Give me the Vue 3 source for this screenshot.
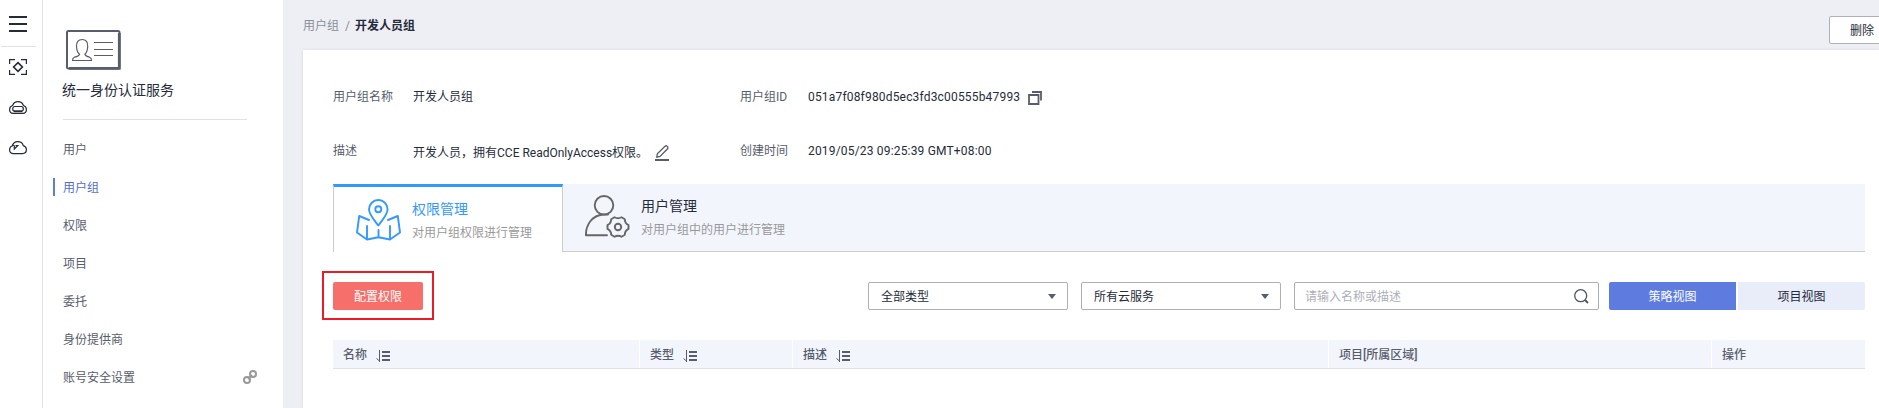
<script setup>
const menu = ['用户', '用户组', '权限', '项目', '委托', '身份提供商', '账号安全设置']
const columns = [
  { label: '名称', sort: true },
  { label: '类型', sort: true },
  { label: '描述', sort: true },
  { label: '项目[所属区域]', sort: false },
  { label: '操作', sort: false },
]
const selects = ['全部类型', '所有云服务']
</script>

<template>
  <div class="page">
    <nav class="rail">
      <div class="burger"><i></i><i></i><i></i></div>
      <div class="rail-line"></div>
      <svg class="rail-icon first" width="18" height="16" viewBox="0 0 18 16">
        <path d="M.6 5V.6H6M12 .6h5.4V5M17.400 11v4.400H12M6 15.400H.6V11" />
        <path d="M9 3.600 13.400 8 9 12.400 4.600 8Z" stroke-width="1.600" />
      </svg>
      <svg class="rail-icon second" width="18" height="14" viewBox="0 0 18 14">
        <path d="M4.200 12.400C1.900 12.200.600 10.400.600 8.400.600 6.500 1.900 5 3.600 4.500 4.500 2 6.500.700 9 .700s4.500 1.300 5.400 3.800c1.700.500 3 2 3 3.900 0 2-1.300 3.800-3.600 4Z" />
        <rect x="3.700" y="5.500" width="10.600" height="4.800" rx="2.200" />
        <path d="M5 10.300h8" stroke-width="1.800" />
      </svg>
      <svg class="rail-icon third" width="18" height="14" viewBox="0 0 18 14">
        <path d="M4.500 12.600C2 12.500.600 10.800.600 8.700c0-1.800 1-3.200 2.600-3.700C4 2.300 6.200.700 8.800.700c2.700 0 4.800 1.500 5.500 3.900 1.800.500 3.100 2 3.100 4 0 2.200-1.600 4-3.900 4Z" />
        <path d="M3.200 3.800 5.300 4.800v3.200L8.800 4.500H6.500" />
      </svg>
    </nav>

    <aside class="side">
      <svg class="logo" width="55" height="40" viewBox="0 0 55 40">
        <rect x="1" y="1" width="52.500" height="37.500" rx="1.500" fill="none" stroke="#575d6c" stroke-width="2" />
        <path d="M53.300 3v35.300H3" fill="none" stroke="#575d6c" stroke-width="2.800" />
        <path d="M13.500 24.200c-1.600-1.300-2.800-4-3-7.500-.300-4.500 1.800-7.200 5.700-7.200s5.800 2.700 5.500 7.200c-.200 3.500-1.300 6.200-2.800 7.500.5 1.600 2.300 2.400 4.600 3 1.600.500 2 1.600 2 3.300h-19c0-1.700.4-2.800 2-3.300 2.700-.700 4.500-1.400 5-3Z" fill="none" stroke="#575d6c" stroke-width="1.200" />
        <path d="M28 12.500h19M28 19.500h19M28 25.500h19" stroke="#575d6c" />
      </svg>
      <h1>统一身份认证服务</h1>
      <ul>
        <li v-for="(m, i) in menu" :key="m" :class="{ active: i === 1 }">
          <span>{{ m }}</span>
          <svg v-if="i === 6" width="14" height="14" viewBox="0 0 14 14" fill="none" stroke="#999">
            <circle cx="10" cy="4" r="3" stroke-width="2" />
            <circle cx="4" cy="10" r="3" stroke-width="2" />
            <path d="M5 9 9 5" stroke-width="2" />
          </svg>
        </li>
      </ul>
    </aside>

    <main>
      <header>
        <div class="crumb"><span>用户组</span><span class="slash">/</span><b>开发人员组</b></div>
        <button class="delete">删除</button>
      </header>

      <section class="card">
        <div class="info">
          <label>用户组名称</label>
          <div class="val">开发人员组</div>
          <label>用户组ID</label>
          <div class="val">
            <span class="id">051a7f08f980d5ec3fd3c00555b47993</span>
            <svg class="copy" width="14" height="14" viewBox="0 0 14 14" fill="none" stroke="#575d6c">
              <path d="M1 4h9.500v9H1Z" stroke-width="1.800" />
              <path d="M4 1h9v8.500" stroke-width="1.800" />
            </svg>
          </div>
        </div>
        <div class="info second-row">
          <label>描述</label>
          <div class="val desc">
            <span>开发人员，拥有<span class="policy">CCE ReadOnlyAccess</span>权限。</span>
            <svg class="pen" width="14" height="16" viewBox="0 0 14 16" fill="none" stroke="#575d6c">
              <path d="M0 15h14" stroke-width="2" />
              <path d="M1.800 12.200 2.300 8.800 10 1.200Q11.200.300 12.300 1.400T12.600 3.800L5 11.500Z" stroke-width="1.300" />
            </svg>
          </div>
          <label>创建时间</label>
          <div class="val"><span class="date">2019/05/23 09:25:39 GMT+08:00</span></div>
        </div>

        <div class="tabs">
          <div class="tab active">
            <svg width="45" height="42" viewBox="0 0 45 42" fill="none" stroke="#3399ff" stroke-width="1.900" stroke-linecap="round" stroke-linejoin="round">
              <path d="M22.300 26.500C18 21 13 15.500 13 10.300a9.300 9.300 0 0 1 18.600 0c0 5.200-5 10.700-9.300 16.200Z" />
              <circle cx="22.300" cy="10.300" r="3" />
              <path d="M13 21 3.200 17 1 33.500 11 40.500l11.500-2.300L34 40.500l10-7L41.800 17 32 21M11 27v13M22.500 31v7M34 27v13" />
            </svg>
            <div><h2>权限管理</h2><p>对用户组权限进行管理</p></div>
          </div>
          <div class="tab">
            <svg width="45" height="44" viewBox="0 0 45 44" fill="none" stroke="#666" stroke-width="1.900" stroke-linecap="round" stroke-linejoin="round">
              <circle cx="19" cy="10.300" r="9.300" />
              <path d="M23 19.500h-5C7.500 20.500.900 29 .900 40.200H22" />
              <circle cx="33" cy="32" r="3.200" />
              <path d="M29.500 22.300q3.500 2 7 0l3.300 1.900q0 4 3.700 5.900v3.800q-3.700 1.900-3.700 5.900l-3.300 1.900q-3.500-2-7 0l-3.300-1.900q0-4-3.700-5.900v-3.800q3.700-1.900 3.700-5.900Z" />
            </svg>
            <div><h2>用户管理</h2><p>对用户组中的用户进行管理</p></div>
          </div>
        </div>

        <div class="tools">
          <div class="highlight"><button class="primary">配置权限</button></div>
          <div class="filters">
            <div v-for="s in selects" :key="s" class="field select">
              <span>{{ s }}</span>
              <svg width="8" height="5" viewBox="0 0 8 5"><path d="M0 0h8L4 5Z" fill="#575d6c" /></svg>
            </div>
            <div class="field search">
              <span>请输入名称或描述</span>
              <svg width="15" height="15" viewBox="0 0 15 15" fill="none" stroke="#4d5363">
                <circle cx="6.700" cy="6.700" r="6" stroke-width="1.300" />
                <path d="m11 11 3 3" stroke-width="1.800" />
              </svg>
            </div>
            <div class="views"><button class="on">策略视图</button><button>项目视图</button></div>
          </div>
        </div>

        <div class="thead">
          <div v-for="c in columns" :key="c.label" class="th">
            <span>{{ c.label }}</span>
            <svg v-if="c.sort" width="14" height="12" viewBox="0 0 14 12" fill="none" stroke="#575d6c">
              <path d="M3.500 0v12M3.500 11 .500 8.500" stroke-width="1" />
              <path d="M6 2h8M6 6h8M6 10h8" stroke-width="2" />
            </svg>
          </div>
        </div>
      </section>
    </main>
  </div>
</template>

<style>
html, body { overflow: hidden; background: #eeeff4; }
</style>

<style scoped>
* { box-sizing: border-box; margin: 0; padding: 0; }
.page {
  display: flex;
  width: 1879px;
  height: 408px;
  overflow: hidden;
  font: 12px/18px Roboto, "Noto Sans CJK SC", sans-serif;
  color: #252b3a;
  white-space: nowrap;
}
svg { display: block; flex: none; }
button { font: inherit; border: 0; color: inherit; padding-top: 2px; }
.rail { width: 43px; flex: none; background: #fff; border-right: 1px solid #dfe1e6; padding-top: 16px; }
.burger { display: flex; flex-direction: column; gap: 5px; margin-left: 9px; width: 18px; }
.burger i { height: 2px; background: #252b3a; }
.rail-line { height: 1px; width: 35px; margin: 14px 0 0 1px; background: #dfe1e6; }
.rail-icon { margin-left: 9px; fill: none; stroke: #252b3a; stroke-width: 1.2; }
.first { margin-top: 12px; }
.second { margin-top: 26px; }
.third { margin-top: 26px; }

.side { width: 240px; flex: none; background: #fff; padding-top: 30px; }
.logo { margin-left: 23px; }
h1 { font-size: 14px; font-weight: 400; line-height: 20px; margin: 10px 36px 0 20px; height: 40px; border-bottom: 1px solid #dfe1e6; text-indent: -1px; }
ul { list-style: none; margin-top: 20px; }
li { display: flex; align-items: center; justify-content: space-between; height: 18px; margin: 0 26px 20px 10px; padding-left: 8px; border-left: 2px solid transparent; color: #575d6c; }
li span { padding-top: 2px; }
li.active { color: #526ecc; border-color: #5e7ce0; }

main { flex: 1; min-width: 0; background: #eeeff4; padding-left: 20px; }
header { display: flex; justify-content: space-between; height: 50px; }
.crumb { padding-top: 17px; color: #8a8e99; }
.slash { margin: 0 5px 0 6px; }
.crumb b { color: #252b3a; }
.delete { width: 70px; height: 28px; margin: 16px -20px 0 0; padding-left: 20px; text-align: left; background: #fff; border: 1px solid #adb0b8; border-radius: 2px; }
.card { height: 358px; background: #fff; padding: 38px 14px 0 30px; box-shadow: 0 0 3px rgba(0, 0, 0, .1); }
.info { display: grid; grid-template-columns: 80px 327px 68px 1fr; align-items: start; height: 18px; }
.info label { color: #575d6c; }
.val { display: flex; align-items: center; }
.second-row { margin-top: 36px; }
.desc { height: 22px; }
.id, .date { letter-spacing: .18px; }
.copy { margin-left: 8px; margin-top: 2px; }
.pen { margin-left: 7px; margin-top: -1px; }

.tabs { display: flex; height: 68px; margin-top: 24px; background: #f2f5fc; border-bottom: 1px solid #ccc; }
.tab { display: flex; padding: 11px 0 0 22px; }
.tab h2 { font-size: 14px; font-weight: 400; line-height: 20px; margin-top: 1px; }
.tab p { color: #999; line-height: 18px; margin-top: 5px; }
.tab > div { margin-left: 11px; }
.tab.active { width: 230px; height: 68px; padding: 12px 0 0 22px; background: #fff; border: 1px solid #ccc; border-width: 0 1px; border-top: 3px solid #3399ff; }
.tab.active h2 { color: #3399ff; margin-top: 0; }

.tools { display: flex; justify-content: space-between; margin: 19px 0 0 -11px; height: 50px; }
.highlight { width: 112px; height: 49px; border: 2px solid #ed1c24; padding: 9px; }
.primary { display: block; width: 90px; height: 28px; background: #f66f6a; color: #fff; border-radius: 2px; }
.filters { display: flex; padding-top: 11px; }
.field { display: flex; align-items: center; justify-content: space-between; width: 200px; height: 28px; margin-right: 13px; padding: 0 11px 0 12px; border: 1px solid #adb0b8; border-radius: 2px; background: #fff; }
.field span { padding-top: 2px; }
.search { width: 305px; margin-right: 10px; padding: 0 9px 0 10px; color: #adb0b8; }
.views { display: flex; gap: 2px; }
.views button { width: 127px; height: 28px; background: #e9edfa; border-radius: 0 2px 2px 0; }
.views .on { background: #5e7ce0; color: #fff; border-radius: 2px 0 0 2px; }

.thead { display: grid; grid-template-columns: 307px 153px 536px 383px 1fr; height: 29px; margin-top: 19px; background: #f2f5fc; border-bottom: 1px solid #dfe1e6; }
.th { display: flex; align-items: center; gap: 9px; padding-left: 10px; font-weight: 500; color: #575d6c; border-right: 1px solid #fff; }
.th:last-child { border-right: 0; }
.th span { padding-top: 2px; }
.th svg { margin-top: 4px; }
</style>
